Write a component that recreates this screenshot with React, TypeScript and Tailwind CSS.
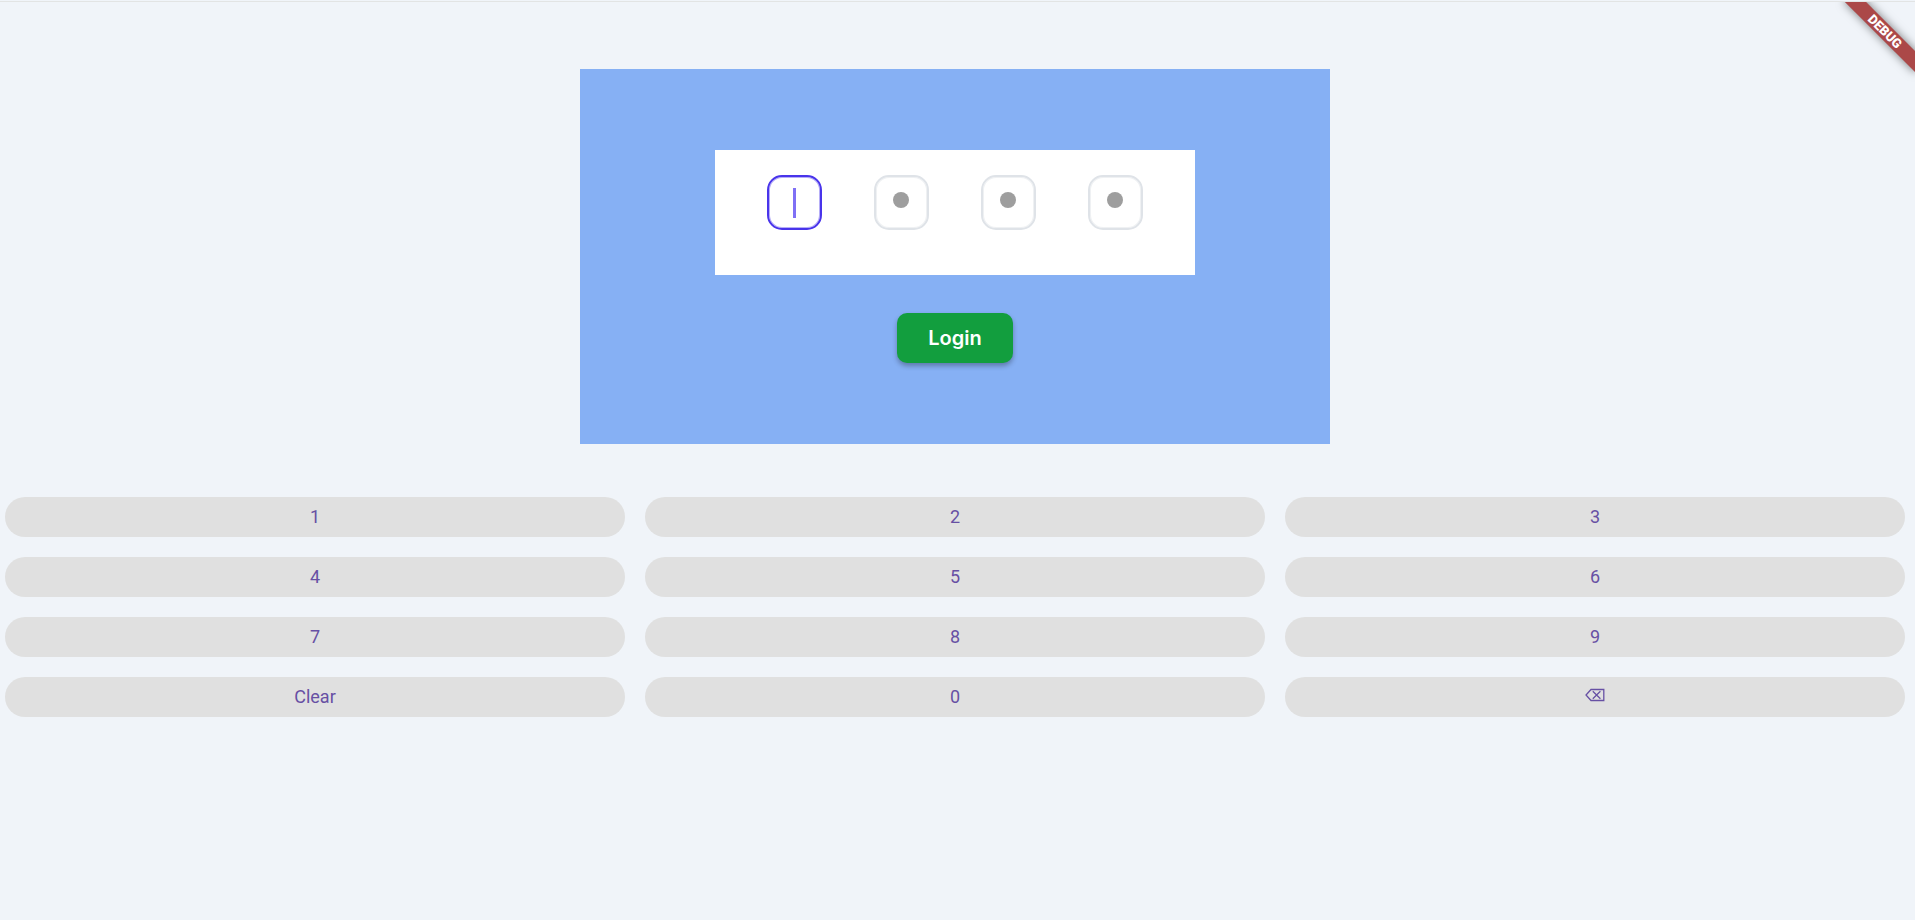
import { useState } from 'react';

const keys = ['1', '2', '3', '4', '5', '6', '7', '8', '9', 'Clear', '0', '⌫'];

function PinField({ index, value, active }: { index: number; value: string; active: boolean }) {
  return (
    <div className="relative flex size-[55px] items-center justify-center">
      <input
        type="text"
        inputMode="numeric"
        maxLength={1}
        readOnly
        aria-label={`PIN digit ${index + 1}`}
        className={
          active
            ? 'size-full rounded-[15px] border-2 border-[#4934eb] bg-white shadow-[inset_0_0_0_1px_rgba(73,52,235,0.4)] outline-none'
            : 'size-full rounded-[15px] border-2 border-[#dfe3e8] bg-white shadow-[inset_0_0_0_1px_rgba(223,227,232,0.5)] outline-none'
        }
      />
      {value && <span className="absolute top-[17px] left-[19px] size-4 rounded-full bg-[#9e9e9e]" />}
      {active && !value && <span className="absolute h-[30px] w-[3px] bg-[#7f70f5]" />}
    </div>
  );
}

function DebugBanner() {
  return (
    <div aria-hidden="true" className="pointer-events-none absolute top-0 right-0 size-24 overflow-hidden">
      <div className="absolute top-[22px] -right-5 flex h-[15px] w-[100px] rotate-45 items-center justify-center bg-[#ab4848] font-[Roboto,sans-serif] text-[13px] leading-[15px] font-black text-white shadow-[0_0_10px_rgba(0,0,0,0.5)]">
        DEBUG
      </div>
    </div>
  );
}

export default function App() {
  const [pin, setPin] = useState<string[]>(['', '0', '0', '0']);
  const active = pin.findIndex((digit) => digit === '');

  const press = (key: string) => {
    if (key === 'Clear') {
      setPin(['', '', '', '']);
    } else if (key === '⌫') {
      const last = active === -1 ? 3 : Math.max(active - 1, 0);
      setPin(pin.map((digit, i) => (i === last ? '' : digit)));
    } else {
      setPin(pin.map((digit, i) => (i === active ? key : digit)));
    }
  };

  return (
    <div className="min-h-screen bg-[#f0f4f9] pt-px font-[Roboto,sans-serif]">
      <div className="relative border-t border-[#e2e4e4] pr-[5px]">
        <DebugBanner />
        <main className="flex flex-col items-center pt-[67px]">
          <form
            onSubmit={(event) => event.preventDefault()}
            className="flex h-[375px] w-full max-w-[750px] flex-col items-center bg-[#86b0f4] pt-[81px]"
          >
            <div className="flex h-[125px] w-full max-w-[480px] items-start justify-evenly bg-white pt-[25px]">
              {pin.map((value, i) => (
                <PinField key={i} index={i} value={value} active={i === active} />
              ))}
            </div>
            <button
              type="submit"
              className="mt-[38px] h-[50px] rounded-[10px] bg-[#129e3e] px-[31px] font-[Inter,sans-serif] text-xl font-semibold text-white shadow-[0_3px_5px_rgba(0,0,0,0.3)]"
            >
              Login
            </button>
          </form>
          <div className="mt-[53px] grid w-full grid-cols-3 gap-5 px-[5px]">
            {keys.map((key) => (
              <button
                key={key}
                type="button"
                aria-label={key === '⌫' ? 'Backspace' : undefined}
                onClick={() => press(key)}
                className="flex h-10 items-center justify-center rounded-full bg-[#e0e0e0] text-lg text-[#6750a4]"
              >
                {key === '⌫' ? (
                  <svg width="20" height="14" viewBox="0 0 20 14" fill="none" stroke="currentColor" strokeWidth="1.3" className="mb-1">
                    <path d="M6 1.5H18.8V12.5H6L1 7Z" />
                    <path d="M7.8 3.2L15.4 10.8M15.4 3.2L7.8 10.8" />
                  </svg>
                ) : (
                  key
                )}
              </button>
            ))}
          </div>
        </main>
      </div>
    </div>
  );
}
